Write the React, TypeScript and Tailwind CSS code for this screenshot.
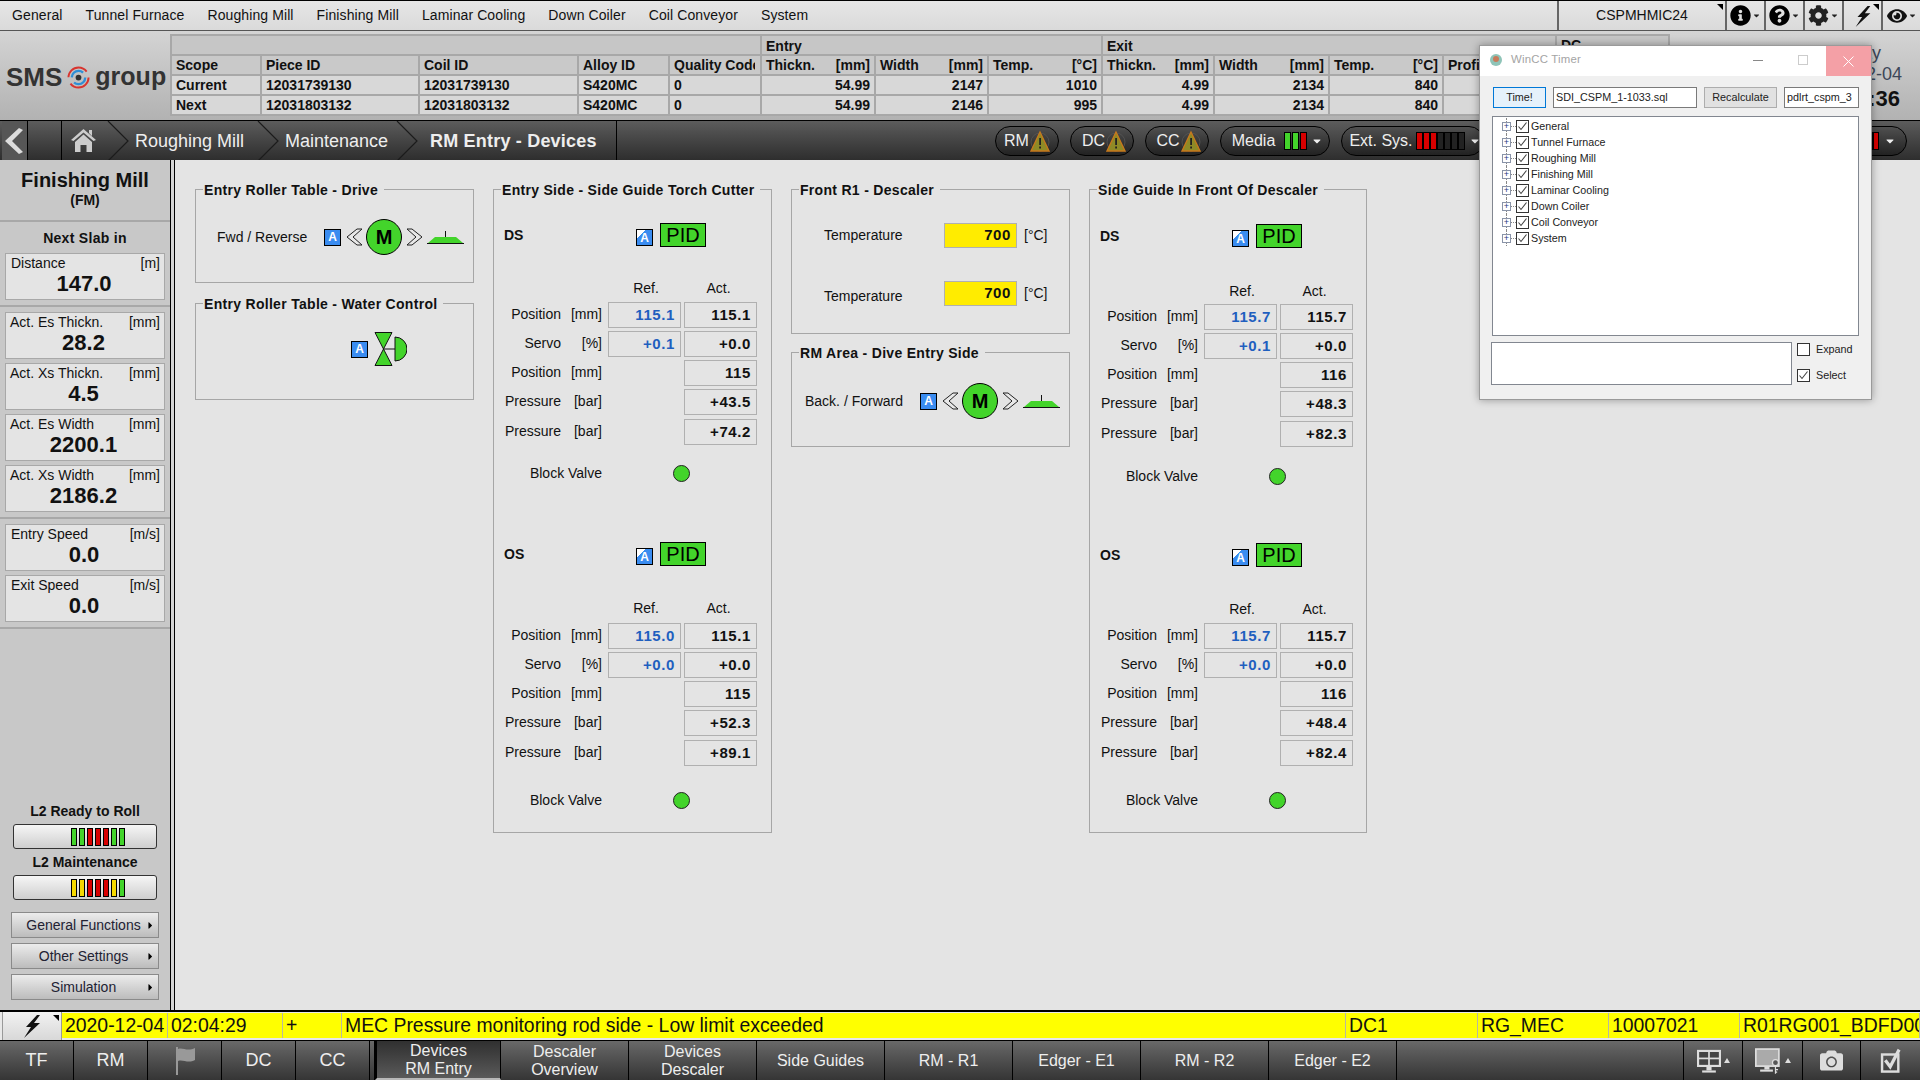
import React from "react";
import { FaInfoCircle, FaQuestionCircle, FaCog, FaEye, FaCamera, FaCaretDown, FaCaretRight } from "react-icons/fa";

const sans = "font-['Liberation_Sans',Arial,sans-serif]";
const G = "bg-[#43d42b]";
const R = "bg-[#d80000]";
const Y = "bg-[#f5d800]";
const K = "bg-[#222]";

const Corner = () => (
  <svg className="absolute right-[2px] top-[3px]" width="6" height="6" viewBox="0 0 6 6">
    <polygon points="0,0 6,0 6,6" fill="#000" />
  </svg>
);

const Bolt = ({ size = 22, color = "#111" }: { size?: number; color?: string }) => (
  <svg width={size} height={size} viewBox="0 0 24 24">
    <polygon points="17,1 6,13 11,13 4,24 20,9 14,9 20,1" fill={color} />
  </svg>
);

function TopMenu() {
  const items = ["General", "Tunnel Furnace", "Roughing Mill", "Finishing Mill", "Laminar Cooling", "Down Coiler", "Coil Conveyor", "System"];
  const btn = "relative w-[39px] h-full border-l-2 border-[#666] flex items-center justify-center gap-[1px]";
  return (
    <div className="h-[31px] shrink-0 flex border-t border-black border-b border-b-[#555] bg-gradient-to-b from-[#e6e6e6] to-[#dadada] text-[14px] text-[#111]">
      <div className="flex-1 flex items-center gap-[23px] pl-[12px] tracking-[0.1px]">
        {items.map((t) => <span key={t}>{t}</span>)}
      </div>
      <div className="relative w-[168px] h-full border-l-2 border-[#666] flex items-center justify-center text-[14px]">
        CSPMHMIC24
        <Corner />
      </div>
      <div className={btn}><FaInfoCircle size={21} color="#000" /><FaCaretDown size={9} color="#222" /></div>
      <div className={btn}><FaQuestionCircle size={21} color="#000" /><FaCaretDown size={9} color="#222" /></div>
      <div className={btn}><FaCog size={21} color="#222" /><FaCaretDown size={9} color="#222" /></div>
      <div className={btn}><Bolt size={22} /><Corner /></div>
      <div className={btn}><FaEye size={20} color="#111" /><FaCaretDown size={9} color="#222" /></div>
    </div>
  );
}

function Logo() {
  return (
    <div className="w-[170px] shrink-0 flex items-center pl-[6px] pt-[3px] gap-[5px] text-[#333] font-bold">
      <span className="text-[26px]">SMS</span>
      <svg width="23" height="23" viewBox="0 0 24 24" className="shrink-0">
        <circle cx="12" cy="12" r="10.5" fill="none" stroke="#d8352f" strokeWidth="2" strokeDasharray="26 7" />
        <circle cx="12" cy="12" r="7" fill="none" stroke="#2f8fd6" strokeWidth="2.4" strokeDasharray="16 6" />
        <circle cx="12" cy="12" r="3" fill="#333" />
      </svg>
      <span className="text-[25px]">group</span>
    </div>
  );
}

function Unit({ a, b }: { a: string; b: string }) {
  return <div className="flex justify-between"><span>{a}</span><span>{b}</span></div>;
}

function DataTable() {
  const widths = ["w-[90px]", "w-[158px]", "w-[159px]", "w-[91px]", "w-[92px]", "w-[114px]", "w-[113px]", "w-[114px]", "w-[112px]", "w-[115px]", "w-[114px]", "w-[113px]", "w-[113px]"];
  const td = "border-2 border-[#a8a8a8] px-[4px] overflow-hidden whitespace-nowrap";
  const num = td + " text-right";
  const rows = [
    ["Current", "12031739130", "12031739130", "S420MC", "0", "54.99", "2147", "1010", "4.99", "2134", "840"],
    ["Next", "12031803132", "12031803132", "S420MC", "0", "54.99", "2146", "995", "4.99", "2134", "840"],
  ];
  return (
    <div className="pt-[3px]">
      <table className="table-fixed w-[1498px] text-[14px] font-bold text-[#111] leading-[16px]">
        <colgroup>{widths.map((w, i) => <col key={i} className={w} />)}</colgroup>
        <tbody>
          <tr className="h-[20px] bg-[#c6c6c6]">
            <td colSpan={5} className={td}></td>
            <td colSpan={3} className={td}><span className="relative top-[1px]">Entry</span></td>
            <td colSpan={4} className={td}><span className="relative top-[1px]">Exit</span></td>
            <td className={td}>DC</td>
          </tr>
          <tr className="h-[20px] bg-[#c9c9c9]">
            <td className={td}>Scope</td>
            <td className={td}>Piece ID</td>
            <td className={td}>Coil ID</td>
            <td className={td}>Alloy ID</td>
            <td className={td}><div className="w-[81px] overflow-hidden">Quality Code</div></td>
            <td className={td}><Unit a="Thickn." b="[mm]" /></td>
            <td className={td}><Unit a="Width" b="[mm]" /></td>
            <td className={td}><Unit a="Temp." b="[°C]" /></td>
            <td className={td}><Unit a="Thickn." b="[mm]" /></td>
            <td className={td}><Unit a="Width" b="[mm]" /></td>
            <td className={td}><Unit a="Temp." b="[°C]" /></td>
            <td className={td}>Profile</td>
            <td className={td}></td>
          </tr>
          {rows.map((r) => (
            <tr key={r[0]} className="h-[20px] bg-[#d8d8d8]">
              {r.map((c, i) => <td key={i} className={i < 5 ? td : num}>{c}</td>)}
              <td className={td}></td>
              <td className={td}></td>
            </tr>
          ))}
        </tbody>
      </table>
    </div>
  );
}

function Header() {
  return (
    <div className="h-[89px] shrink-0 flex bg-gradient-to-b from-[#d4d4d4] to-[#b2b2b2] overflow-hidden">
      <Logo />
      <DataTable />
      <div className="ml-auto w-[136px] mr-[-4px] text-center text-[#3c4658] leading-none pt-[13px]">
        <div className="text-[18px]">Friday</div>
        <div className="text-[18px] mt-[3px]">2020-12-04</div>
        <div className="text-[22px] font-bold text-[#111] mt-[5px]">02:04:36</div>
      </div>
    </div>
  );
}

const CrumbArrow = () => (
  <svg width="22" height="40" viewBox="0 0 22 40" className="shrink-0">
    <polyline points="1,0 21,20 1,40" fill="none" stroke="#1c1c1c" strokeWidth="1.2" />
  </svg>
);

const Warn = () => (
  <svg width="20" height="24" viewBox="0 0 20 24" className="shrink-0">
    <circle cx="10" cy="13" r="9" fill="none" stroke="#555" strokeWidth="0.8" />
    <polygon points="10,3 19,22 1,22" fill="#8f8a26" stroke="#c9791c" strokeWidth="1.3" />
    <rect x="9.2" y="9" width="1.8" height="7" fill="#222" />
    <rect x="9.2" y="17.5" width="1.8" height="2" fill="#222" />
  </svg>
);

const Led = ({ c, w = "w-[6px]" }: { c: string; w?: string }) => (
  <span className={`block h-[18px] border border-black ${w} ${c}`} />
);

function Chip({ w, children }: { w: string; children: React.ReactNode }) {
  return (
    <div className={`${w} h-[30px] rounded-full border border-black bg-gradient-to-b from-[#505050] to-[#222] flex items-center justify-center gap-[1px] text-[16px] text-[#eee]`}>
      {children}
    </div>
  );
}

function NavBar() {
  return (
    <div className="h-[40px] shrink-0 flex items-center border-t border-black bg-gradient-to-b from-[#5c5c5c] to-[#2e2e2e] text-[#eee] text-[18px]">
      <div className="w-[26px] ml-[2px] h-full border-r border-black flex items-center pl-[2px] bg-[#565656]">
        <svg width="20" height="28" viewBox="0 0 20 28"><polygon points="15,1 19,3 8,14 19,25 15,27 1,14" fill="#ddd" /></svg>
      </div>
      <div className="w-[34px] h-full border-r border-black" />
      <div className="h-full flex items-center">
        <div className="w-[45px] flex justify-center pr-[2px]">
          <svg width="25" height="25" viewBox="0 0 25 25">
            <path d="M12.5 1 L25 12 L22.5 13 L12.5 4.5 L2.5 13 L0 12 Z M18 2 h3 v6 l-3 -3 Z" fill="#ccc" />
            <path d="M4 14 L12.5 6.5 L21 14 V24 H15.5 V17 H9.5 V24 H4 Z" fill="#ccc" />
          </svg>
        </div>
        <CrumbArrow />
        <span className="ml-[6px] w-[122px] pt-[1px]">Roughing Mill</span>
        <CrumbArrow />
        <span className="ml-[6px] w-[111px] pt-[1px]">Maintenance</span>
        <CrumbArrow />
        <span className="ml-[12px] font-bold pt-[1px] tracking-[0.2px]">RM Entry - Devices</span>
      </div>
      <div className="h-full border-r border-black ml-[19px]" />
      <div className="flex-1" />
      <div className="flex items-center gap-[11px] pr-[13px]">
        <Chip w="w-[64px]">RM<Warn /></Chip>
        <Chip w="w-[64px] pl-[4px]">DC<Warn /></Chip>
        <Chip w="w-[64px] pl-[3px]">CC<Warn /></Chip>
        <Chip w="w-[110px]">
          <span className="ml-[5px] mr-[8px]">Media</span>
          <span className="flex gap-[1px]"><Led c={G} w="w-[7px]" /><Led c={G} w="w-[7px]" /><Led c={R} w="w-[7px]" /></span>
          <FaCaretDown size={12} className="ml-[3px]" />
        </Chip>
        <Chip w="w-[143px]">
          <span className="ml-[5px] mr-[2px]">Ext. Sys.</span>
          <span className="flex">
            {[R, R, R, K, K, K, K].map((c, i) => <Led key={i} c={c} w="w-[7px]" />)}
          </span>
          <FaCaretDown size={12} className="ml-[3px]" />
        </Chip>
        <Chip w="w-[412px]">
          <span className="flex-1" />
          <span className="flex"><Led c={R} /><Led c={R} /></span>
          <FaCaretDown size={12} className="ml-[4px] mr-[10px]" />
        </Chip>
      </div>
    </div>
  );
}

function InfoCard({ label, unit, value, inset = false }: { label: string; unit: string; value: string; inset?: boolean }) {
  return (
    <div className={`mx-[5px] h-[47px] bg-[#e4e4e4] border border-[#a8a8a8] flex flex-col text-[#111] ${inset ? "pl-[5px]" : "pl-[4px]"} pr-[4px]`}>
      <div className="flex justify-between text-[14px] leading-[16px] pt-[1px]">
        <span>{label}</span>
        <span>{unit}</span>
      </div>
      <div className="text-center font-bold text-[22px] leading-[24px] mt-[1px] pr-[3px]">{value}</div>
    </div>
  );
}

function LedButton({ colors }: { colors: string[] }) {
  return (
    <div className="mx-[13px] h-[25px] rounded-[3px] border border-[#333] bg-gradient-to-b from-[#f6f6f6] to-[#cfcfcf] flex items-center pl-[57px] gap-[2px]">
      {colors.map((c, i) => <Led key={i} c={c} />)}
    </div>
  );
}

function SideButton({ label }: { label: string }) {
  return (
    <div className="relative mx-[11px] h-[26px] border border-[#8a8a8a] bg-gradient-to-b from-[#ececec] to-[#bcbcbc] flex items-center justify-center text-[14px] text-[#223] pr-[3px]">
      {label}
      <FaCaretRight size={11} color="#000" className="absolute right-[2px] top-[7px]" />
    </div>
  );
}

function Sidebar() {
  return (
    <div className="w-[170px] shrink-0 bg-[#c8c8c8] flex flex-col text-[#111]">
      <div className="h-[62px] border-b-2 border-[#a8a8a8] text-center font-bold pt-[9px]">
        <div className="text-[20px] leading-[22px]">Finishing Mill</div>
        <div className="text-[14px] leading-[16px] mt-[1px]">(FM)</div>
      </div>
      <div className="h-[31px] flex items-center justify-center font-bold text-[14px] tracking-[0.3px] pt-[1px]">Next Slab in</div>
      <InfoCard label="Distance" unit="[m]" value="147.0" inset />
      <div className="h-[2px] bg-[#a8a8a8] mt-[5px] mb-[5px]" />
      <div className="flex flex-col gap-[4px]">
        <InfoCard label="Act. Es Thickn." unit="[mm]" value="28.2" />
        <InfoCard label="Act. Xs Thickn." unit="[mm]" value="4.5" />
        <InfoCard label="Act. Es Width" unit="[mm]" value="2200.1" />
        <InfoCard label="Act. Xs Width" unit="[mm]" value="2186.2" />
      </div>
      <div className="h-[2px] bg-[#a8a8a8] mt-[5px] mb-[5px]" />
      <div className="flex flex-col gap-[4px]">
        <InfoCard label="Entry Speed" unit="[m/s]" value="0.0" inset />
        <InfoCard label="Exit Speed" unit="[m/s]" value="0.0" inset />
      </div>
      <div className="h-[2px] bg-[#a8a8a8] mt-[5px]" />
      <div className="flex-1" />
      <div className="text-center font-bold text-[14px] leading-[16px] mb-[5px]">L2 Ready to Roll</div>
      <LedButton colors={[G, G, R, R, R, G, G]} />
      <div className="text-center font-bold text-[14px] leading-[16px] mt-[5px] mb-[5px]">L2 Maintenance</div>
      <LedButton colors={[Y, Y, R, R, R, Y, G]} />
      <div className="flex flex-col gap-[5px] mt-[12px] mb-[10px]">
        <SideButton label="General Functions" />
        <SideButton label="Other Settings" />
        <SideButton label="Simulation" />
      </div>
    </div>
  );
}

function Panel({ title, className, children }: { title: string; className: string; children?: React.ReactNode }) {
  return (
    <fieldset className={`border border-[#a6a6a6] ${className}`}>
      <legend className="ml-[7px] px-[1px] pr-[6px] text-[14px] leading-[16px] font-bold tracking-[0.3px] text-[#111]">
        <span className="relative top-[1px]">{title}</span>
      </legend>
      {children}
    </fieldset>
  );
}

function AutoBadge({ cut = false }: { cut?: boolean }) {
  return (
    <div className={`w-[17px] h-[17px] shrink-0 border border-black flex items-center justify-center text-white font-bold text-[12px] ${cut ? "bg-[linear-gradient(135deg,#fff_28%,#3a8cf0_28%)]" : "bg-[#3a8cf0]"}`}>A</div>
  );
}

function MotorGroup() {
  const chev = (flip: boolean) => (
    <svg width="17" height="18" viewBox="0 0 17 18" className={flip ? "shrink-0 -scale-x-100" : "shrink-0"}>
      <polygon points="11,1 16,1 7,9 16,17 11,17 1,9" fill="#e8e8e8" stroke="#222" strokeWidth="1" />
    </svg>
  );
  return (
    <div className="flex items-center">
      <AutoBadge />
      <div className="ml-[5px]">{chev(false)}</div>
      <div className="ml-[3px] w-[36px] h-[36px] rounded-full border border-black bg-[#43d42b] flex items-center justify-center font-bold text-[20px] text-black">M</div>
      <div className="ml-[4px]">{chev(true)}</div>
      <svg width="37" height="13" viewBox="0 0 37 13" className="ml-[4px] shrink-0">
        <line x1="18.5" y1="0" x2="18.5" y2="6" stroke="#111" />
        <polygon points="8,6 29,6 36,12 1,12" fill="#43d42b" />
        <line x1="0" y1="12.5" x2="37" y2="12.5" stroke="#111" />
      </svg>
    </div>
  );
}

function Valve() {
  return (
    <svg width="33" height="34" viewBox="0 0 33 34">
      <polygon points="1,0.5 18,0.5 9.5,17" fill="#43d42b" stroke="#111" />
      <polygon points="1,33.5 18,33.5 9.5,17" fill="#43d42b" stroke="#111" />
      <line x1="9.5" y1="17" x2="21" y2="17" stroke="#111" />
      <path d="M21 5 A12 12 0 0 1 21 29 Z" fill="#43d42b" stroke="#111" />
    </svg>
  );
}

function ValueBox({ v, blue = false }: { v: string; blue?: boolean }) {
  return (
    <div className={`w-[73px] h-[26px] border border-[#b0b0b0] flex items-center justify-end pr-[5px] font-bold text-[15px] tracking-[0.6px] ${blue ? "text-[#1f5fbf]" : "text-[#111]"}`}>{v}</div>
  );
}

type RowData = { name: string; unit: string; ref?: string; act: string };

function SideBlock({ label, rows, top, refTop, rowsTop, valveGap }: { label: string; rows: RowData[]; top: string; refTop: string; rowsTop: string; valveGap: string }) {
  return (
    <div className={`text-[14px] text-[#111] ${top}`}>
      <div className="h-[24px] flex items-center">
        <span className="ml-[10px] w-[132px] font-bold text-[14px]">{label}</span>
        <div className="mt-[5px]"><AutoBadge cut /></div>
        <div className="ml-[7px] w-[46px] h-[24px] bg-[#43d42b] border border-black flex items-center justify-center text-[20px] leading-none text-black">PID</div>
      </div>
      <div className={`flex pl-[116px] text-[14px] h-[16px] leading-[16px] ${refTop}`}>
        <span className="w-[72px] text-center">Ref.</span>
        <span className="w-[73px] text-center">Act.</span>
      </div>
      <div className={`flex flex-col gap-[3px] ${rowsTop}`}>
        {rows.map((r, i) => (
          <div key={i} className={`flex items-center ${i === 4 ? "mt-[1px]" : ""}`}>
            <span className="w-[67px] text-right pb-[2px]">{r.name}</span>
            <span className="w-[41px] text-right pb-[2px]">{r.unit}</span>
            <div className="ml-[6px]">{r.ref ? <ValueBox v={r.ref} blue /> : <div className="w-[73px]" />}</div>
            <div className="ml-[3px]"><ValueBox v={r.act} /></div>
          </div>
        ))}
      </div>
      <div className={`flex items-center ${valveGap}`}>
        <span className="w-[108px] text-right">Block Valve</span>
        <div className="ml-[71px] w-[17px] h-[17px] rounded-full border border-[#222] bg-[#43d42b]" />
      </div>
    </div>
  );
}

function rowsOf(ref1: string, act1: string, ref2: string, act2: string, p: string, a: string, b: string): RowData[] {
  return [
    { name: "Position", unit: "[mm]", ref: ref1, act: act1 },
    { name: "Servo", unit: "[%]", ref: ref2, act: act2 },
    { name: "Position", unit: "[mm]", act: p },
    { name: "Pressure", unit: "[bar]", act: a },
    { name: "Pressure", unit: "[bar]", act: b },
  ];
}

function TempRow({ className, labelClass = "" }: { className: string; labelClass?: string }) {
  return (
    <div className={`flex items-center text-[14px] text-[#111] ${className}`}>
      <span className={`ml-[32px] w-[120px] ${labelClass}`}>Temperature</span>
      <div className="w-[73px] h-[25px] bg-[#ffec00] border border-[#b0b0b0] flex items-center justify-end pr-[5px] font-bold text-[15px] tracking-[0.6px]">700</div>
      <span className="ml-[7px]">[°C]</span>
    </div>
  );
}

function Main() {
  return (
    <div className="flex-1 bg-[#e4e4e4] flex gap-[19px] pl-[20px] pt-[21px] items-start">
      <div className="w-[279px] flex flex-col gap-[12px]">
        <Panel title="Entry Roller Table - Drive" className="h-[102px]">
          <div className="flex items-center mt-[22px] text-[14px] text-[#111]">
            <span className="ml-[21px] w-[107px]">Fwd / Reverse</span>
            <MotorGroup />
          </div>
        </Panel>
        <Panel title="Entry Roller Table - Water Control" className="h-[105px]">
          <div className="flex items-center justify-start ml-[155px] mt-[21px]">
            <AutoBadge />
            <div className="ml-[6px]"><Valve /></div>
          </div>
        </Panel>
      </div>
      <div className="w-[279px]">
        <Panel title="Entry Side - Side Guide Torch Cutter" className="h-[652px]">
          <SideBlock label="DS" top="mt-[26px]" refTop="mt-[33px]" rowsTop="mt-[6px]" valveGap="mt-[18px]" rows={rowsOf("115.1", "115.1", "+0.1", "+0.0", "115", "+43.5", "+74.2")} />
          <SideBlock label="OS" top="mt-[58px]" refTop="mt-[34px]" rowsTop="mt-[7px]" valveGap="mt-[24px]" rows={rowsOf("115.0", "115.1", "+0.0", "+0.0", "115", "+52.3", "+89.1")} />
        </Panel>
      </div>
      <div className="w-[279px] flex flex-col gap-[10px]">
        <Panel title="Front R1 - Descaler" className="h-[153px]">
          <TempRow className="mt-[26px]" />
          <TempRow className="mt-[32px]" labelClass="pt-[6px]" />
        </Panel>
        <Panel title="RM Area - Dive Entry Side" className="h-[103px]">
          <div className="flex items-center mt-[23px] text-[14px] text-[#111]">
            <span className="ml-[13px] w-[115px]">Back. / Forward</span>
            <MotorGroup />
          </div>
        </Panel>
      </div>
      <div className="w-[278px]">
        <Panel title="Side Guide In Front Of Descaler" className="h-[652px]">
          <SideBlock label="DS" top="mt-[27px]" refTop="mt-[35px]" rowsTop="mt-[5px]" valveGap="mt-[19px]" rows={rowsOf("115.7", "115.7", "+0.1", "+0.0", "116", "+48.3", "+82.3")} />
          <SideBlock label="OS" top="mt-[56px]" refTop="mt-[34px]" rowsTop="mt-[6px]" valveGap="mt-[24px]" rows={rowsOf("115.7", "115.7", "+0.0", "+0.0", "116", "+48.4", "+82.4")} />
        </Panel>
      </div>
    </div>
  );
}

function StatusBar() {
  const cols: [string, string][] = [
    ["w-[106px]", "2020-12-04"], ["w-[115px]", "02:04:29"], ["w-[59px]", "+"],
    ["w-[1004px]", "MEC Pressure monitoring rod side - Low limit exceeded"],
    ["w-[132px]", "DC1"], ["w-[131px]", "RG_MEC"], ["w-[131px]", "10007021"], ["flex-1", "R01RG001_BDFD001"],
  ];
  return (
    <div className="h-[30px] shrink-0 flex border-t-2 border-black bg-[#e8e8e8]">
      <div className="relative ml-[2px] w-[60px] border-x border-[#999] bg-gradient-to-b from-[#f2f2f2] to-[#d8d8d8] flex items-center justify-center">
        <Bolt size={24} />
        <Corner />
      </div>
      <div className="flex-1 flex h-[25px] mt-[1px] bg-[#ffff00] text-[19.4px] leading-[24px] text-[#111] overflow-hidden">
        {cols.map(([w, t], i) => (
          <div key={i} className={`${w} shrink-0 pl-[3px] border-r border-[#b8b8a0] whitespace-nowrap overflow-hidden`}>{t}</div>
        ))}
      </div>
    </div>
  );
}

function BottomNav() {
  const cell = "h-full border-r border-black flex items-center justify-center text-[#eee] bg-gradient-to-b from-[#696969] to-[#353535]";
  const tabs: [string, string][] = [["Descaler", "Overview"], ["Devices", "Descaler"], ["Side Guides", ""], ["RM - R1", ""], ["Edger - E1", ""], ["RM - R2", ""], ["Edger - E2", ""]];
  return (
    <div className="h-[40px] shrink-0 flex bg-gradient-to-b from-[#696969] to-[#353535] border-t border-black">
      <div className={`${cell} w-[74px] text-[18px]`}>TF</div>
      <div className={`${cell} w-[74px] text-[18px]`}>RM</div>
      <div className={`${cell} w-[74px]`}>
        <svg width="22" height="30" viewBox="0 0 22 30"><path d="M2 1 h2 v28 h-2 Z" fill="#999" /><path d="M4 3 C9 1 13 6 21 2 V14 C14 18 9 13 4 15 Z" fill="#999" /></svg>
      </div>
      <div className={`${cell} w-[74px] text-[18px]`}>DC</div>
      <div className={`${cell} w-[74px] text-[18px]`}>CC</div>
      <div className="w-[5px] h-full border-r border-black" />
      <div className="w-[126px] h-full border-r border-black border-b-2 border-b-[#b8b8b8] border-l-2 border-l-black flex flex-col items-center justify-center text-[16px] leading-[18px] text-[#eee] bg-gradient-to-b from-[#303030] to-[#5a5a5a]">
        <span>Devices</span><span>RM Entry</span>
      </div>
      {tabs.map(([a, b]) => (
        <div key={a + b} className={`${cell} w-[128px] flex-col text-[16px] leading-[18px]`}>
          <span>{a}</span>{b && <span>{b}</span>}
        </div>
      ))}
      <div className="flex-1 h-full border-r border-black" />
      <div className={`${cell} w-[59px] gap-[2px]`}>
        <svg width="26" height="24" viewBox="0 0 30 28">
          <rect x="1" y="1" width="28" height="20" fill="#ddd" />
          <rect x="3.5" y="3.5" width="10.5" height="6.5" fill="#444" /><rect x="16" y="3.5" width="10.5" height="6.5" fill="#444" />
          <rect x="3.5" y="12" width="10.5" height="6.5" fill="#444" /><rect x="16" y="12" width="10.5" height="6.5" fill="#444" />
          <rect x="12" y="21" width="6" height="4" fill="#ddd" /><rect x="7" y="25" width="16" height="2.5" fill="#ddd" />
        </svg>
        <svg width="6" height="5" viewBox="0 0 6 5"><polygon points="3,0 6,5 0,5" fill="#ddd" /></svg>
      </div>
      <div className={`${cell} w-[60px] gap-[1px]`}>
        <svg width="29" height="28" viewBox="0 0 34 32">
          <rect x="1" y="2" width="27" height="20" fill="#aaa" stroke="#ddd" strokeWidth="2" />
          <rect x="11" y="22" width="6" height="4" fill="#ddd" /><rect x="6" y="26" width="15" height="2.5" fill="#ddd" />
          <circle cx="24" cy="18" r="3.5" fill="#555" stroke="#ddd" strokeWidth="1.4" />
          <path d="M24 21.5 V31 M24 26 h3 M24 29 h2" stroke="#ddd" strokeWidth="1.4" />
        </svg>
        <svg width="6" height="5" viewBox="0 0 6 5"><polygon points="3,0 6,5 0,5" fill="#ddd" /></svg>
      </div>
      <div className={`${cell} w-[58px]`}><FaCamera size={23} color="#ddd" /></div>
      <div className="w-[59px] h-full flex items-center justify-center">
        <svg width="24" height="26" viewBox="0 0 26 32">
          <rect x="2" y="8" width="20" height="21" fill="none" stroke="#ddd" strokeWidth="3" />
          <path d="M6 15 L12 23 L23 2" fill="none" stroke="#ddd" strokeWidth="4" />
        </svg>
      </div>
    </div>
  );
}

const Box = ({ checked = true }: { checked?: boolean }) => (
  <div className="w-[13px] h-[13px] shrink-0 bg-white border border-[#333] flex items-center justify-center">
    {checked && (
      <svg width="11" height="11" viewBox="0 0 11 11"><polyline points="1.5,5.5 4,8.5 9.5,1.5" fill="none" stroke="#444" strokeWidth="1.1" /></svg>
    )}
  </div>
);

function TreeRow({ label }: { label: string }) {
  return (
    <div className="relative h-[16px] flex items-center text-[10.7px] text-[#222]">
      <div className="absolute left-[13px] top-0 h-[16px] border-l border-dotted border-[#888]" />
      <div className="relative w-[9px] h-[9px] ml-[9px] bg-white border border-[#8a94a8] flex items-center justify-center text-[9px] leading-none text-[#2a3a80]">+</div>
      <div className="w-[5px] border-t border-dotted border-[#888]" />
      <Box />
      <span className="ml-[2px]">{label}</span>
    </div>
  );
}

function TimerWindow() {
  const tree = ["General", "Tunnel Furnace", "Roughing Mill", "Finishing Mill", "Laminar Cooling", "Down Coiler", "Coil Conveyor", "System"];
  return (
    <div className="absolute left-[1479px] top-[45px] w-[393px] h-[355px] flex flex-col bg-[#f0f0f0] border border-[#9a9a9a] shadow-[0_0_8px_rgba(0,0,0,0.35)] text-[10.8px] text-[#222]">
      <div className="h-[30px] shrink-0 bg-white flex items-center pb-[2px]">
        <svg width="14" height="14" viewBox="0 0 14 14" className="ml-[9px]">
          <circle cx="7" cy="7" r="6" fill="#8fc4b8" /><circle cx="7" cy="6" r="3" fill="#c87a5a" />
        </svg>
        <span className="ml-[8px] text-[#a4a4a4] text-[11.4px] tracking-[0.2px]">WinCC Timer</span>
        <div className="flex-1" />
        <div className="w-[10px] border-t border-[#888] mr-[35px]" />
        <div className="w-[10px] h-[10px] border border-[#ccc] mr-[18px]" />
        <div className="w-[45px] h-[30px] -mb-[2px] bg-[#f4a0a6] flex items-center justify-center">
          <svg width="11" height="11" viewBox="0 0 11 11"><path d="M0.5 0.5 L10.5 10.5 M10.5 0.5 L0.5 10.5" stroke="#fff" /></svg>
        </div>
      </div>
      <div className="flex-1 flex flex-col pl-[12px] pr-[12px]">
        <div className="flex items-stretch h-[21px] mt-[11px] ml-[1px]">
          <div className="w-[53px] border border-[#0078d7] bg-[#e5f1fb] flex items-center justify-center">Time!</div>
          <div className="w-[144px] ml-[7px] border border-[#7a7a7a] bg-white flex items-center pl-[2px]">SDI_CSPM_1-1033.sql</div>
          <div className="w-[73px] ml-[7px] border border-[#adadad] bg-[#e1e1e1] flex items-center justify-center">Recalculate</div>
          <div className="w-[75px] ml-[7px] border border-[#7a7a7a] bg-white flex items-center pl-[2px]">pdlrt_cspm_3</div>
        </div>
        <div className="h-[220px] mt-[8px] bg-white border border-[#828790] pt-[1px] flex flex-col">
          {tree.map((t) => <TreeRow key={t} label={t} />)}
        </div>
        <div className="flex mt-[6px] -ml-[1px]">
          <div className="w-[301px] h-[43px] bg-white border border-[#828790]" />
          <div className="flex flex-col gap-[13px] ml-[5px] pt-[1px] leading-[13px]">
            <div className="flex items-center gap-[6px]"><Box checked={false} /><span>Expand</span></div>
            <div className="flex items-center gap-[6px]"><Box /><span>Select</span></div>
          </div>
        </div>
      </div>
    </div>
  );
}

export default function App() {
  return (
    <div className={`relative w-[1920px] h-[1080px] flex flex-col overflow-hidden bg-[#e4e4e4] ${sans}`}>
      <TopMenu />
      <Header />
      <NavBar />
      <div className="flex-1 flex min-h-0">
        <Sidebar />
        <div className="w-[5px] shrink-0 border-x border-black bg-[#d4d4d4]" />
        <Main />
      </div>
      <StatusBar />
      <BottomNav />
      <TimerWindow />
    </div>
  );
}
